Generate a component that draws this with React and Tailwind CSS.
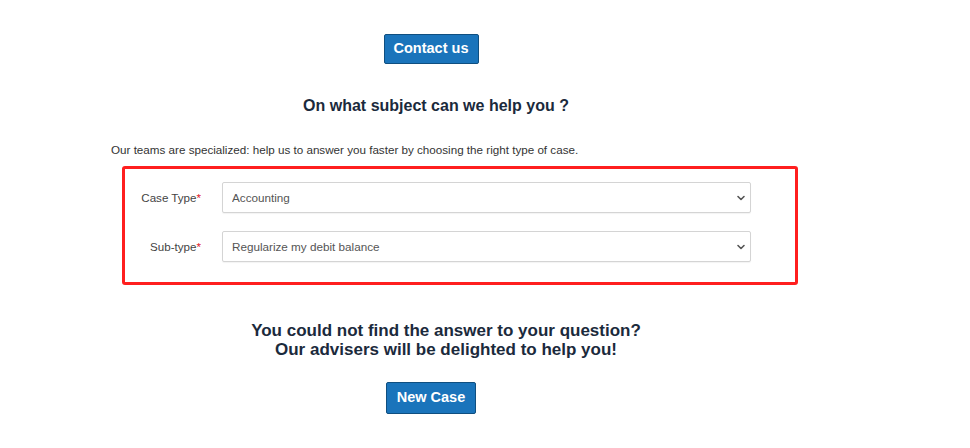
export default function App() {
  const font = { fontFamily: '"Liberation Sans", Arial, sans-serif' }

  const Chevron = () => (
    <svg className="pointer-events-none absolute right-[5px] top-1/2 -translate-y-1/2 w-[10px] h-[10px]" viewBox="0 0 10 10" fill="none">
      <path d="M2 3.5 L5 6.5 L8 3.5" stroke="#555" strokeWidth="1.6" strokeLinecap="round" strokeLinejoin="round" />
    </svg>
  )

  const Field = ({ label, value }) => (
    <div className="flex items-center">
      <label className="w-[76px] text-right text-[11.6px] text-[#444]">
        {label}
        <span className="text-[#e0202a]">*</span>
      </label>
      <div className="relative ml-[21px] w-[529px]">
        <select
          defaultValue={value}
          className="appearance-none w-full h-[31px] border border-[#d4d4d4] rounded-[2px] bg-white pl-[9px] text-[11.7px] text-[#555] shadow-[0_1px_1px_rgba(0,0,0,0.05)] outline-none"
          style={font}
        >
          <option>{value}</option>
        </select>
        <Chevron />
      </div>
    </div>
  )

  return (
    <div className="w-[970px] h-[448px] bg-white overflow-hidden" style={font}>
      <div className="ml-[111px] w-[640px] pt-[34px] flex flex-col">
        <div className="flex justify-center">
          <button className="w-[95px] h-[30px] bg-[#1a74bb] border border-[#0f4f80] rounded-[2px] text-white text-[14.5px] font-bold">
            Contact us
          </button>
        </div>

        <h2 className="mt-[33px] ml-[10px] text-center text-[16px] font-bold text-[#1b2a3c] leading-[18px]">
          On what subject can we help you ?
        </h2>

        <p className="mt-[28px] text-[11.65px] text-[#333] leading-[14px]">
          Our teams are specialized: help us to answer you faster by choosing the right type of case.
        </p>

        <div className="mt-[9px] ml-[11px] w-[676px] h-[119px] border-[3px] border-[#ff1f1f] rounded-[3px] pt-[13px] flex flex-col gap-[18px]">
          <Field label="Case Type" value="Accounting" />
          <Field label="Sub-type" value="Regularize my debit balance" />
        </div>

        <div className="mt-[36px] ml-[30px] text-center text-[17px] font-bold text-[#1b2a3c] leading-[19px]">
          <div>You could not find the answer to your question?</div>
          <div>Our advisers will be delighted to help you!</div>
        </div>

        <div className="mt-[23px] flex justify-center">
          <button className="w-[90px] h-[32px] bg-[#1a74bb] border border-[#0f4f80] rounded-[2px] text-white text-[14.5px] font-bold">
            New Case
          </button>
        </div>
      </div>
    </div>
  )
}
